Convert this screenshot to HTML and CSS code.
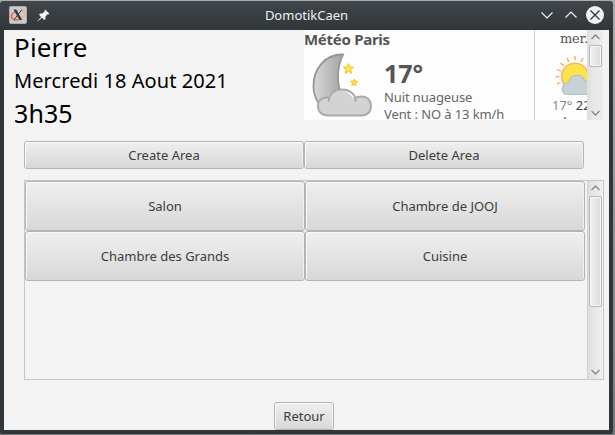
FILE: index.html
```html
<!DOCTYPE html>
<html lang="fr">
<head>
<meta charset="utf-8">
<title>DomotikCaen</title>
<link rel="stylesheet" href="styles.css">
</head>
<body>
<div class="window">
  <header class="titlebar">
    <svg class="app-icon" width="18" height="18" viewBox="0 0 18 18">
      <rect x=".5" y=".5" width="17" height="17" rx="1.5" fill="#c9cbcc" stroke="#a9adaf"/>
      <path d="M9 5C5 5.500 2.300 8 2.500 11c.3 3 4 3.500 7.500 2.500" fill="none" stroke="#ee6b36" stroke-width="1.600"/>
      <path d="M10 13.500c4-1 6-4 5.600-6.500C15.200 5 13 4.200 11 4.600" fill="none" stroke="#edb477" stroke-width="1.300"/>
      <path d="M4.500 3.500h2.700L13.200 14h-2.700z" fill="#33383d"/>
      <path d="M13 3.500L4.800 14" stroke="#33383d" stroke-width="1"/>
    </svg>
    <svg class="pin" width="13" height="13" viewBox="0 0 13 13">
      <path d="M8.200.5l4.200 4.200-1.100.7-.7-.1-2.200 2.300.1 2.400-1.200 1L5 8.800.7 12.300.4 12l3.700-4.100L2 5.700l1-1.200 2.400.1 2.300-2.300-.1-.8z" fill="#f5f6f6"/>
    </svg>
    <h1 class="title">DomotikCaen</h1>
    <div class="controls">
      <svg width="66" height="20" viewBox="0 0 66 20">
        <path d="M2.500 7.500l5.500 5.500 5.500-5.500M26.500 12.500l5.500-5.500 5.500 5.500" fill="none" stroke="#f1f2f2" stroke-width="1.200"/>
        <circle cx="56" cy="10" r="9" fill="#eff0f1"/>
        <path d="M51.500 5.500l9 9M60.500 5.500l-9 9" stroke="#31363b" stroke-width="1.300"/>
      </svg>
    </div>
  </header>
  <main class="content">
    <section class="top">
      <div class="greeting">
        <div class="name">Pierre</div>
        <div class="date">Mercredi 18 Aout 2021</div>
        <div class="time">3h35</div>
      </div>
      <div class="weather">
        <div class="today">
          <div class="place">Météo Paris</div>
          <div class="now">
            <svg class="moon" width="80" height="66" viewBox="0 0 80 66">
              <defs>
                <linearGradient id="moonFill" x1="0" y1="0" x2="1" y2="0">
                  <stop offset="0" stop-color="#d8d8d8"/><stop offset="1" stop-color="#a3a3a3"/>
                </linearGradient>
              </defs>
              <path d="M39 1.500C22 1 9 15 9.500 34c.3 12 7 21 16 25L38 43C32 30 33 14 39 1.500z" fill="url(#moonFill)" stroke="#969696" stroke-width="1.800"/>
              <path d="M24.500 62.500C17 62.500 14 58 14 53.500 14 48 18 44.500 24 44.500 24 39 31 36.500 38 37.500c6 1 9 4 11 8C60 41 66.500 47 66.500 53c0 6-4 9.500-9.500 9.500z" fill="#d3d3d3"/>
              <path d="M25 48.500c-1-6 4-12 13-12 7.500 0 11.500 4 13.500 8.500M52 48.500c-2-2.500-.5-5 5.500-5 6 0 9.500 4 9.500 9.500 0 6-4 9.500-9.500 9.500H24.500c-7 0-10.500-4-10.500-9.500C14 47 18.500 44 24 44.500" fill="none" stroke="#a8a8a8" stroke-width="1.900"/>
              <path d="M44.500 10.500l1.300 3.400 3.700.3-2.800 2.500 1 3.700-3.200-2-3.400 2.200.9-3.900-2.700-2.500 3.700-.2zM50.300 26l.8 2.100 2.400.4-1.900 1.600.4 2.500-2-1.300-2.300 1.300.7-2.500-1.500-2 2.500-.1z" fill="#ffe44f" stroke="#f2c033" stroke-width="1"/>
            </svg>
            <div class="reading">
              <div class="temp">17°</div>
              <div class="line">Nuit nuageuse</div>
              <div class="line wind">Vent : NO à 13 km/h</div>
            </div>
          </div>
        </div>
        <div class="forecast">
          <div class="day">mer.</div>
          <svg class="sun" width="52" height="42" viewBox="0 0 52 42">
            <path d="M25 1v4M17 3l2 4M10.500 8l3.300 3M7 14.500l4 1.500M5.500 22l4-.5M7 29l3-1.500M33 3l-2 4M40 8l-3 3" stroke="#f8bd6c" stroke-width="1.700"/>
            <circle cx="25" cy="21.500" r="13.300" fill="#fbe34a" stroke="#f8b962" stroke-width="1.600"/>
            <path d="M17 39.500c-6.500 0-6.500-12 2-12 1-9 13-10 16-1 6-1 11 2 11 7 0 4-3 6-6 6z" fill="#c8d1d8" stroke="#b3bcc3" stroke-width="1.200"/>
          </svg>
          <div class="range">17° <span>22°</span></div>
          <div class="mark"></div>
        </div>
        <div class="scrollbar">
          <svg width="9" height="6" viewBox="0 0 9 6"><path d="M.5 5l4-4 4 4"/></svg>
          <div class="thumb small"></div>
          <svg class="down" width="9" height="6" viewBox="0 0 9 6"><path d="M.5 1l4 4 4-4"/></svg>
        </div>
      </div>
    </section>
    <div class="actions">
      <button>Create Area</button>
      <button>Delete Area</button>
    </div>
    <section class="areas">
      <div class="grid">
        <button>Salon</button>
        <button>Chambre de JOOJ</button>
        <button>Chambre des Grands</button>
        <button>Cuisine</button>
      </div>
      <div class="scrollbar inset">
        <svg width="9" height="6" viewBox="0 0 9 6"><path d="M.5 5l4-4 4 4"/></svg>
        <div class="thumb large"></div>
        <svg class="down" width="9" height="6" viewBox="0 0 9 6"><path d="M.5 1l4 4 4-4"/></svg>
      </div>
    </section>
    <button class="back">Retour</button>
  </main>
</div>
</body>
</html>
```

FILE: styles.css
```css
* { box-sizing: border-box; }
body {
  margin: 0;
  height: 435px;
  padding: 1px 2px 1px 0;
  background: linear-gradient(#a9aeaa, #a5a6a7 20%, #77797b);
  font-family: "Noto Sans", sans-serif;
  overflow: hidden;
}
.window {
  width: 613px;
  height: 433px;
  padding: 0 4px 4px;
  background: #31363a;
  border-radius: 4px 4px 2px 2px;
  overflow: hidden;
}
.titlebar {
  display: grid;
  grid-template-columns: 18px 13px 1fr 66px;
  column-gap: 9px;
  align-items: center;
  height: 29px;
  margin: 0 -4px;
  padding: 0 8px 1px 9px;
  background: linear-gradient(#40464b, #31363a);
}
.titlebar svg { display: block; }
.pin { margin-left: 1px; }
.title {
  margin: 0 0 0 25px;
  text-align: center;
  font-size: 13px;
  font-weight: 400;
  line-height: 18px;
  color: #eff0f1;
}
.controls { height: 20px; }
.content {
  display: flex;
  flex-direction: column;
  height: 400px;
  background: #f3f3f3;
}
.top { display: flex; height: 90px; }
.greeting { width: 300px; padding-left: 10px; color: #000; white-space: nowrap; }
.name { font-size: 26px; line-height: 35px; letter-spacing: .15px; }
.date { font-size: 20px; line-height: 32px; letter-spacing: .08px; }
.time { font-size: 25px; line-height: 32px; letter-spacing: .1px; }
.weather {
  display: flex;
  width: 300px;
  height: 90px;
  overflow: hidden;
  background: #fdfdfd;
}
.today { width: 231px; flex: none; border-right: 1px solid #ccc; color: #555; }
.place { font-size: 15px; font-weight: 700; line-height: 19px; letter-spacing: -.28px; }
.now { display: flex; }
.moon { margin-top: 4px; flex: none; }
.reading { padding-top: 9px; white-space: nowrap; }
.temp { font-size: 25px; font-weight: 700; line-height: 30px; }
.line { font-size: 13px; line-height: 18px; letter-spacing: -.1px; color: #666; }
.wind { line-height: 16px; }
.forecast { width: 52px; flex: none; overflow: hidden; white-space: nowrap; color: #777; }
.day { padding-left: 25px; font: 13px/18px "DejaVu Serif", serif; letter-spacing: -.25px; color: #555; }
.sun { display: block; margin: 7px 0 0 15px; }
.range { padding-left: 17px; font-size: 13px; line-height: 17px; color: #888; }
.range span { color: #444; }
.mark { width: 2px; height: 2px; margin: 3px 0 0 29px; background: #8792a0; }
.scrollbar {
  display: flex;
  flex-direction: column;
  align-items: center;
  width: 17px;
  flex: none;
  padding: 4px 0;
  border-right: 1px solid #f6f6f6;
  background: linear-gradient(90deg, #dedede, #e5e5e5 30%, #ededed);
}
.scrollbar path { fill: none; stroke: #888; stroke-width: 1.300; }
.scrollbar .down { margin-top: auto; }
.thumb {
  width: 13px;
  margin-top: 5px;
  border: 1px solid #b5b5b5;
  border-radius: 2px;
  background: linear-gradient(90deg, #f2f2f2, #dadada);
  box-shadow: inset 0 0 0 1px #f7f7f7;
}
.small { height: 22px; }
.large { height: 111px; }
button {
  margin: 0;
  padding: 0;
  border: 1px solid #b4b4b4;
  border-radius: 3px;
  background: linear-gradient(#efefef, #d8d8d8);
  box-shadow: inset 1px 1px #fafafa, inset -1px 0 #f0f0f0;
  font: 13px/18px "Noto Sans", sans-serif;
  color: #3c3c3c;
}
.actions {
  display: grid;
  grid-template-columns: 280px 280px;
  height: 28px;
  margin: 21px 0 0 20px;
}
.areas {
  display: flex;
  justify-content: space-between;
  width: 580px;
  height: 200px;
  margin: 11px 0 0 20px;
  border: 1px solid #c6c6c6;
}
.grid {
  display: grid;
  grid-template-columns: 280px 280px;
  grid-template-rows: 50px 50px;
}
.inset { width: 16px; border-left: 1px solid #d2d2d2; }
.back { width: 60px; height: 28px; margin: 22px 0 0 270px; }
```
